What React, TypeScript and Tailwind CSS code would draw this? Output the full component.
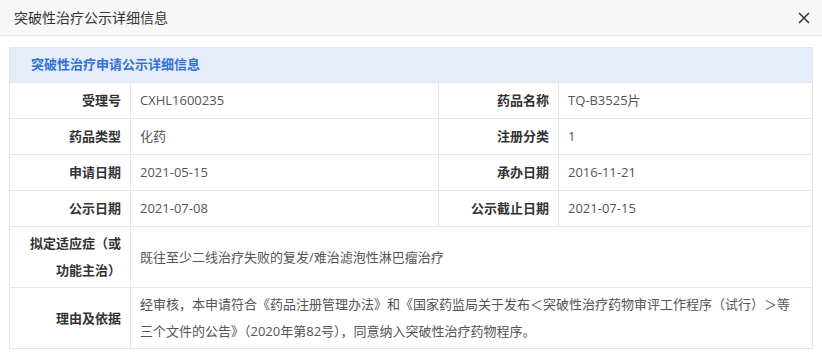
import React from 'react';

const font = { fontFamily: '"Open Sans", "Noto Sans CJK SC", sans-serif' };

function Label({ children }: { children: React.ReactNode }) {
  return (
    <div className="flex items-center justify-end border-r border-[#e6e6e6] pl-[9px] pr-[9px] text-right font-bold text-[#333]">
      {children}
    </div>
  );
}

function Value({ children, span }: { children: React.ReactNode; span?: boolean }) {
  return (
    <div className={`flex items-center pl-[9px] pr-[12px] text-[#555] ${span ? 'col-span-3' : 'border-r border-[#e6e6e6] last:border-r-0'}`}>
      {children}
    </div>
  );
}

const rows: [string, string, string, string][] = [
  ['受理号', 'CXHL1600235', '药品名称', 'TQ-B3525片'],
  ['药品类型', '化药', '注册分类', '1'],
  ['申请日期', '2021-05-15', '承办日期', '2016-11-21'],
  ['公示日期', '2021-07-08', '公示截止日期', '2021-07-15'],
];

export default function App() {
  return (
    <div className="h-[362px] w-[822px] overflow-hidden bg-white text-[13px]" style={font}>
      <div className="flex h-[36px] items-center justify-between border-b border-[#e8e8e8] bg-[#f8f8f8] pl-[14px] pr-[12px]">
        <span className="text-[14px] text-[#333]">突破性治疗公示详细信息</span>
        <svg width="12" height="12" viewBox="0 0 12 12" className="text-[#333]">
          <path d="M1 1 L11 11 M11 1 L1 11" stroke="currentColor" strokeWidth="1.5" />
        </svg>
      </div>

      <div className="mx-[9px] mt-[11px] border border-[#e6e6e6]">
        <div className="flex h-[35px] items-center border-b border-[#e6e6e6] bg-[#e6edf9] pl-[21px] font-bold text-[#2f72d6]">
          突破性治疗申请公示详细信息
        </div>
        {rows.map(([l1, v1, l2, v2]) => (
          <div key={l1} className="grid h-[36px] grid-cols-[121px_308px_120px_1fr] border-b border-[#e6e6e6]">
            <Label>{l1}</Label>
            <Value>{v1}</Value>
            <Label>{l2}</Label>
            <div className="flex items-center pl-[9px] text-[#555]">{v2}</div>
          </div>
        ))}
        <div className="grid grid-cols-[121px_308px_120px_1fr] border-b border-[#e6e6e6] leading-[27px]">
          <div className="border-r border-[#e6e6e6] py-[3px] pl-[9px] pr-[9px] text-right font-bold text-[#333]">
            拟定适应症（或功能主治）
          </div>
          <div className="col-span-3 flex items-center pl-[9px] pr-[12px] text-[#555]">
            既往至少二线治疗失败的复发/难治滤泡性淋巴瘤治疗
          </div>
        </div>
        <div className="grid grid-cols-[121px_308px_120px_1fr] leading-[27px]">
          <div className="flex items-center justify-end border-r border-[#e6e6e6] py-[3px] pl-[9px] pr-[9px] font-bold text-[#333]">
            理由及依据
          </div>
          <div className="col-span-3 py-[3px] pl-[9px] pr-[12px] text-[#555]">
            经审核，本申请符合《药品注册管理办法》和《国家药监局关于发布＜突破性治疗药物审评工作程序（试行）＞等三个文件的公告》（2020年第82号），同意纳入突破性治疗药物程序。
          </div>
        </div>
      </div>
    </div>
  );
}
